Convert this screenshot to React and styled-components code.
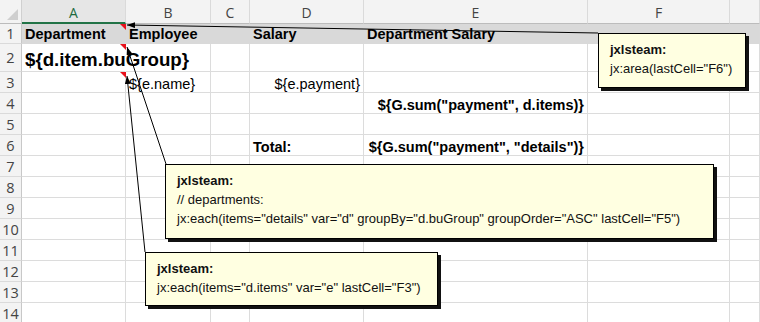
import React from 'react';
import styled, { createGlobalStyle, css } from 'styled-components';

const GlobalStyle = createGlobalStyle`
  body {
    margin: 0;
    background: #fff;
    font-family: "Liberation Sans", Arial, sans-serif;
  }
`;

const COLS = ['A', 'B', 'C', 'D', 'E', 'F', 'G'];
const ROW_HEIGHTS = [20, 28, 21, 21, 21, 21, 21, 21, 21, 21, 21, 21, 21, 21];

// cell contents by row, keyed by column letter
const CONTENT = {
  1: {
    A: { text: 'Department', bold: true, note: true },
    B: { text: 'Employee', bold: true },
    D: { text: 'Salary', bold: true },
    E: { text: 'Department Salary', bold: true },
  },
  2: { A: { text: '${d.item.buGroup}', bold: true, big: true, note: true, spill: true } },
  3: {
    A: { note: true },
    B: { text: '${e.name}' },
    D: { text: '${e.payment}', right: true },
  },
  4: { E: { text: '${G.sum("payment", d.items)}', bold: true, right: true } },
  6: {
    D: { text: 'Total:', bold: true },
    E: { text: '${G.sum("payment", "details")}', bold: true, right: true },
  },
};

const Page = styled.div`
  position: relative;
  width: 760px;
  height: 322px;
  overflow: hidden;
`;

const Sheet = styled.div`
  display: grid;
  grid-template-columns: 22px 104px 85px 39px 114px 224px 142px 1fr;
  grid-template-rows: 24px ${ROW_HEIGHTS.map((h) => h + 'px').join(' ')};
`;

const Corner = styled.div`
  position: relative;
  background: #f3f3f3;
  border-right: 1px solid #d0d0d0;
  border-bottom: 1px solid #bcbcbc;
  box-sizing: border-box;
  &::after {
    content: '';
    position: absolute;
    right: 3px;
    bottom: 3px;
    border-left: 11px solid transparent;
    border-bottom: 11px solid #cfcfcf;
  }
`;

const ColHead = styled.div`
  display: flex;
  align-items: center;
  justify-content: center;
  box-sizing: border-box;
  background: #f3f3f3;
  color: #444;
  font-family: "Open Sans", "Liberation Sans", sans-serif;
  font-size: 14px;
  border-bottom: 1px solid #bcbcbc;
  border-right: 1px solid #dadada;
  padding-top: 2px;
  ${({ $active }) =>
    $active &&
    css`
      background: #e6e6e6;
      color: #1e6b40;
      border-bottom: 2px solid #217346;
    `}
`;

const RowHead = styled.div`
  display: flex;
  align-items: center;
  justify-content: center;
  box-sizing: border-box;
  background: #f3f3f3;
  color: #444;
  font-family: "Open Sans", "Liberation Sans", sans-serif;
  font-size: 14.5px;
  border-right: 1px solid #c8c8c8;
  border-bottom: 1px solid #dadada;
`;

const Cell = styled.div`
  position: relative;
  display: flex;
  align-items: flex-end;
  justify-content: ${({ $right }) => ($right ? 'flex-end' : 'flex-start')};
  box-sizing: border-box;
  padding: 0 3px 1px 3px;
  white-space: nowrap;
  color: #000;
  font-size: ${({ $big }) => ($big ? '18.7px' : '14.5px')};
  font-weight: ${({ $bold }) => ($bold ? 700 : 400)};
  line-height: 1;
  border-right: 1px solid ${({ $spill }) => ($spill ? 'transparent' : '#dcdcdc')};
  border-bottom: 1px solid #dcdcdc;
  ${({ $fill }) =>
    $fill &&
    css`
      background: #d9d9d9;
      border-color: #d9d9d9;
      padding-bottom: 2px;
    `}
`;

const CellText = styled.span`
  position: relative;
  z-index: 1;
`;

const NoteFlag = styled.span`
  position: absolute;
  top: 0;
  right: -1px;
  width: 0;
  height: 0;
  border-left: 6px solid transparent;
  border-top: 6px solid #e8121c;
  z-index: 2;
`;

const Connectors = styled.svg`
  position: absolute;
  left: 0;
  top: 0;
  pointer-events: none;
  z-index: 3;
`;

const Note = styled.div`
  position: absolute;
  left: ${({ $x }) => $x}px;
  top: ${({ $y }) => $y}px;
  width: ${({ $w }) => $w}px;
  height: ${({ $h }) => $h}px;
  box-sizing: border-box;
  padding: 6px 11px;
  background: #ffffe1;
  border: 1px solid #000;
  box-shadow: 3px 3px 0 #111;
  font-size: 13px;
  line-height: 19px;
  color: #111;
  white-space: nowrap;
  z-index: 4;
`;

const NoteAuthor = styled.div`
  font-weight: 700;
`;

const NoteLine = styled.div``;

const NOTES = [
  { x: 598, y: 33, w: 148, h: 55, lines: ['jx:area(lastCell="F6")'] },
  {
    x: 165,
    y: 164,
    w: 549,
    h: 75,
    lines: [
      '// departments:',
      'jx:each(items="details" var="d" groupBy="d.buGroup" groupOrder="ASC" lastCell="F5")',
    ],
  },
  { x: 145, y: 252, w: 293, h: 54, lines: ['jx:each(items="d.items" var="e" lastCell="F3")'] },
];

const LINKS = [
  { x1: 127, y1: 25, x2: 598, y2: 33 },
  { x1: 127, y1: 47, x2: 166, y2: 164 },
  { x1: 127, y1: 76, x2: 145, y2: 252 },
];

const App = () => {
  return (
    <Page>
      <GlobalStyle />
      <Sheet>
        <Corner />
        {COLS.map((c) => (
          <ColHead key={c} $active={c === 'A'}>
            {c === 'G' ? '' : c}
          </ColHead>
        ))}
        {ROW_HEIGHTS.map((_, i) => {
          const row = i + 1;
          const data = CONTENT[row] || {};
          return (
            <React.Fragment key={row}>
              <RowHead>{row}</RowHead>
              {COLS.map((c) => {
                const cell = data[c] || {};
                return (
                  <Cell
                    key={c}
                    $fill={row === 1}
                    $bold={cell.bold}
                    $big={cell.big}
                    $right={cell.right}
                    $spill={cell.spill}
                  >
                    {cell.text && <CellText>{cell.text}</CellText>}
                    {cell.note && <NoteFlag />}
                  </Cell>
                );
              })}
            </React.Fragment>
          );
        })}
      </Sheet>

      <Connectors width="760" height="322">
        <defs>
          <marker id="arrow" markerWidth="8" markerHeight="6" refX="0" refY="3" orient="auto" markerUnits="userSpaceOnUse">
            <path d="M0,3 L8,0 L8,6 Z" fill="#000" />
          </marker>
        </defs>
        {LINKS.map((l, i) => (
          <line key={i} x1={l.x1} y1={l.y1} x2={l.x2} y2={l.y2} stroke="#000" strokeWidth="1" markerStart="url(#arrow)" />
        ))}
      </Connectors>

      {NOTES.map((n, i) => (
        <Note key={i} $x={n.x} $y={n.y} $w={n.w} $h={n.h}>
          <NoteAuthor>jxlsteam:</NoteAuthor>
          {n.lines.map((t) => (
            <NoteLine key={t}>{t}</NoteLine>
          ))}
        </Note>
      ))}
    </Page>
  );
};

export default App;
